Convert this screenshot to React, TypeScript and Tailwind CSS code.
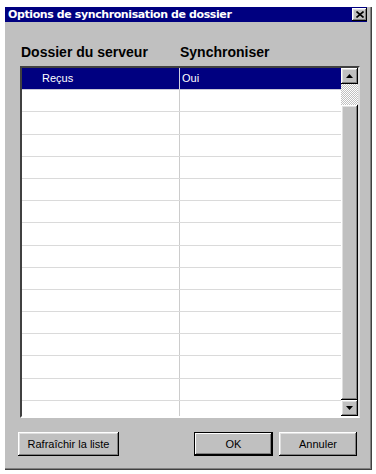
import React from "react";

const raised =
  "shadow-[inset_-1px_-1px_#000,inset_1px_1px_#fff,inset_-2px_-2px_#808080,inset_2px_2px_#dfdfdf]";

function ArrowUp() {
  return (
    <svg width="7" height="4" viewBox="0 0 7 4">
      <path d="M3.5 0 L7 4 L0 4 Z" fill="#000" />
    </svg>
  );
}

function ArrowDown() {
  return (
    <svg width="7" height="4" viewBox="0 0 7 4">
      <path d="M0 0 L7 0 L3.5 4 Z" fill="#000" />
    </svg>
  );
}

function Scrollbar() {
  return (
    <div className="flex h-full w-[17px] shrink-0 flex-col">
      <div className={`flex h-[16px] shrink-0 items-center justify-center bg-[#c0c0c0] ${raised}`}>
        <ArrowUp />
      </div>
      <div className="h-[21px] shrink-0 bg-[repeating-conic-gradient(#ffffff_0_25%,#c0c0c0_0_50%)] bg-[length:2px_2px]" />
      <div className={`flex-1 bg-[#c0c0c0] ${raised}`} />
      <div className={`flex h-[16px] shrink-0 items-center justify-center bg-[#c0c0c0] ${raised}`}>
        <ArrowDown />
      </div>
    </div>
  );
}

const rows = Array.from({ length: 15 });

export default function App() {
  return (
    <div className="min-h-screen bg-white pl-[5px] pt-[7px] font-['Liberation_Sans',Arial,sans-serif]">
      <div className="flex h-[463px] w-[367px] flex-col bg-[#c0c0c0] shadow-[inset_-1px_-1px_#404040,inset_-2px_-2px_#808080]">
        <div className="mr-[5px] flex h-[15px] items-center justify-between bg-[#000080] pl-[3px]">
          <span className="font-['DejaVu_Sans',sans-serif] text-[11px] font-bold leading-none tracking-[-0.4px] text-white">
            Options de synchronisation de dossier
          </span>
          <div className={`flex h-[13px] w-[15px] items-center justify-center bg-[#c0c0c0] ${raised}`}>
            <svg width="8" height="7" viewBox="0 0 8 7">
              <path d="M0.5 0.5 L7.5 6.5 M7.5 0.5 L0.5 6.5" stroke="#000" strokeWidth="1.6" />
            </svg>
          </div>
        </div>

        <div className="ml-[16px] mt-[22px] flex text-[14px] font-bold leading-[16px] text-black">
          <span className="w-[159px]">Dossier du serveur</span>
          <span>Synchroniser</span>
        </div>

        <div className="ml-[15px] mt-[6px] flex h-[352px] w-[340px] border-2 border-t-[#404040] border-l-[#404040] border-b-white border-r-[#dfdfdf] bg-white">
          <div className="flex flex-1 flex-col overflow-hidden text-[11px] leading-none">
            <div className="flex h-[22.2px] shrink-0 border-b border-[#c8c8d8] bg-[#000080] text-white">
              <div className="flex w-[158px] items-center border-r border-[#d0d0e0] pl-[20px]">Reçus</div>
              <div className="flex flex-1 items-center pl-[2px]">Oui</div>
            </div>
            {rows.map((_, i) => (
              <div key={i} className="flex h-[22.2px] shrink-0 border-b border-[#dadada]">
                <div className="w-[158px] border-r border-[#cccccc]" />
                <div className="flex-1" />
              </div>
            ))}
          </div>
          <Scrollbar />
        </div>

        <div className="mt-[14px] flex text-[11px] text-black">
          <button className={`ml-[13px] flex h-[24px] w-[101px] items-center justify-center bg-[#c0c0c0] ${raised}`}>
            Rafraîchir la liste
          </button>
          <button className="ml-[75px] flex h-[24px] w-[79px] items-center justify-center border border-black bg-[#c0c0c0] shadow-[inset_-1px_-1px_#000,inset_1px_1px_#fff,inset_-2px_-2px_#808080]">
            OK
          </button>
          <button className={`ml-[6px] flex h-[24px] w-[78px] items-center justify-center bg-[#c0c0c0] ${raised}`}>
            Annuler
          </button>
        </div>
      </div>
    </div>
  );
}
